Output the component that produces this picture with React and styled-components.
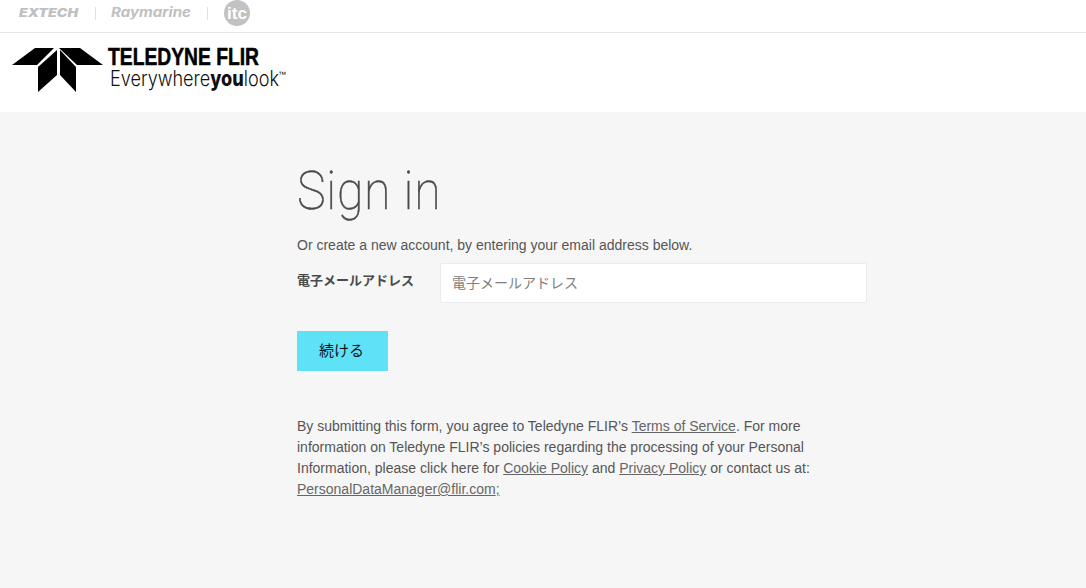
import React from "react";
import styled, { createGlobalStyle } from "styled-components";

const Global = createGlobalStyle`
  html, body { margin: 0; padding: 0; background: #f6f6f6; }
  body { font-family: "Liberation Sans", "Noto Sans CJK JP", sans-serif; color: #555; font-size: 14px; }
  * { box-sizing: border-box; }
`;

const Page = styled.div`
  width: 1086px;
  height: 588px;
  overflow: hidden;
  display: flex;
  flex-direction: column;
`;
const BrandBar = styled.div`
  height: 33px;
  background: #fff;
  border-bottom: 1px solid #e6e6e6;
  display: flex;
  align-items: center;
  padding-left: 18px;
`;
const BrandSvg = styled.svg`
  display: block;
`;
const Header = styled.header`
  height: 79px;
  background: #fff;
  padding: 12px 0 0 12px;
`;
const Main = styled.main`
  flex: 1;
  padding: 50px 0 0 297px;
`;
const Title = styled.h1`
  margin: 0;
  font-family: "Roboto", sans-serif;
  font-weight: 100;
  font-size: 53px;
  line-height: 58px;
  letter-spacing: 0.8px;
  color: #4a4a4a;
  -webkit-text-stroke: 0.5px #4a4a4a;
  transform: scaleX(0.91);
  transform-origin: left center;
`;
const Intro = styled.p`
  margin: 15px 0 0;
  line-height: 21px;
`;
const Field = styled.div`
  display: flex;
  margin-top: 7px;
  width: 570px;
`;
const Label = styled.label`
  width: 143px;
  font-size: 13px;
  font-weight: 700;
  line-height: 20px;
  padding-top: 8px;
  color: #4a4a4a;
`;
const Input = styled.input`
  flex: 1;
  height: 40px;
  background: #fff;
  border: 1px solid #ebebeb;
  border-radius: 2px;
  padding: 0 11px;
  font-family: inherit;
  font-size: 14px;
  &::placeholder { color: #808080; opacity: 1; }
`;
const Button = styled.button`
  display: block;
  margin-top: 28px;
  width: 91px;
  height: 40px;
  background: #5ee2f8;
  border: 0;
  font-family: inherit;
  font-size: 15px;
  line-height: 38px;
  color: #111;
  padding: 0 2px 1px 0;
`;
const Legal = styled.p`
  margin: 45px 0 0;
  width: 530px;
  line-height: 21px;
`;
const Link = styled.a`
  color: #666;
  text-decoration: underline;
`;

export default function App() {
  return (
    <Page>
      <Global />
      <BrandBar>
        <BrandSvg width="240" height="32" viewBox="18 0 240 32">
          <text x="19" y="17" fontFamily="Inter" fontWeight="900" fontStyle="italic" fontSize="11.5" fill="#c0c0c0" textLength="59" lengthAdjust="spacingAndGlyphs">EXTECH</text>
          <rect x="95" y="7" width="1" height="13" fill="#e2e2d8" />
          <text x="111" y="17" fontFamily="Inter" fontWeight="700" fontStyle="italic" fontSize="13" fill="#c0c0c0" textLength="80" lengthAdjust="spacingAndGlyphs">Raymarine</text>
          <rect x="207" y="7" width="1" height="13" fill="#e2e2d8" />
          <circle cx="237" cy="13" r="13" fill="#c2c2c2" />
          <text x="237" y="19" textAnchor="middle" fontFamily="Liberation Sans" fontWeight="700" fontSize="17" fill="#fff" textLength="20" lengthAdjust="spacingAndGlyphs">itc</text>
        </BrandSvg>
      </BrandBar>
      <Header>
        <BrandSvg width="280" height="56" viewBox="12 45 280 56">
          <polygon points="12,65 35,48 54,48 37,65" fill="#000" />
          <polygon points="38,67 57,50 57,75 38,92" fill="#000" />
          <polygon points="60,50 76,67 76,92 60,75" fill="#000" />
          <polygon points="59,48 80,48 103,65 77,65" fill="#000" />
          <text x="108" y="65" fontFamily="Liberation Sans" fontWeight="700" fontSize="23" fill="#000" stroke="#000" strokeWidth="0.5" textLength="151" lengthAdjust="spacingAndGlyphs">TELEDYNE FLIR</text>
          <text x="110" y="86" fontFamily="Inter" fontWeight="300" fontSize="21" fill="#111" textLength="169" lengthAdjust="spacingAndGlyphs">Everywhere<tspan fontWeight="800">you</tspan>look</text>
          <text x="278" y="77" fontFamily="Liberation Sans" fontSize="8" fill="#111">™</text>
        </BrandSvg>
      </Header>
      <Main>
        <Title>Sign in</Title>
        <Intro>Or create a new account, by entering your email address below.</Intro>
        <Field>
          <Label>電子メールアドレス</Label>
          <Input placeholder="電子メールアドレス" />
        </Field>
        <Button>続ける</Button>
        <Legal>
          By submitting this form, you agree to Teledyne FLIR’s <Link href="#">Terms of Service</Link>. For more information on Teledyne FLIR’s policies regarding the processing of your Personal Information, please click here for <Link href="#">Cookie Policy</Link> and <Link href="#">Privacy Policy</Link> or contact us at: <Link href="#">PersonalDataManager@flir.com</Link><Link as="span">;</Link>
        </Legal>
      </Main>
    </Page>
  );
}
